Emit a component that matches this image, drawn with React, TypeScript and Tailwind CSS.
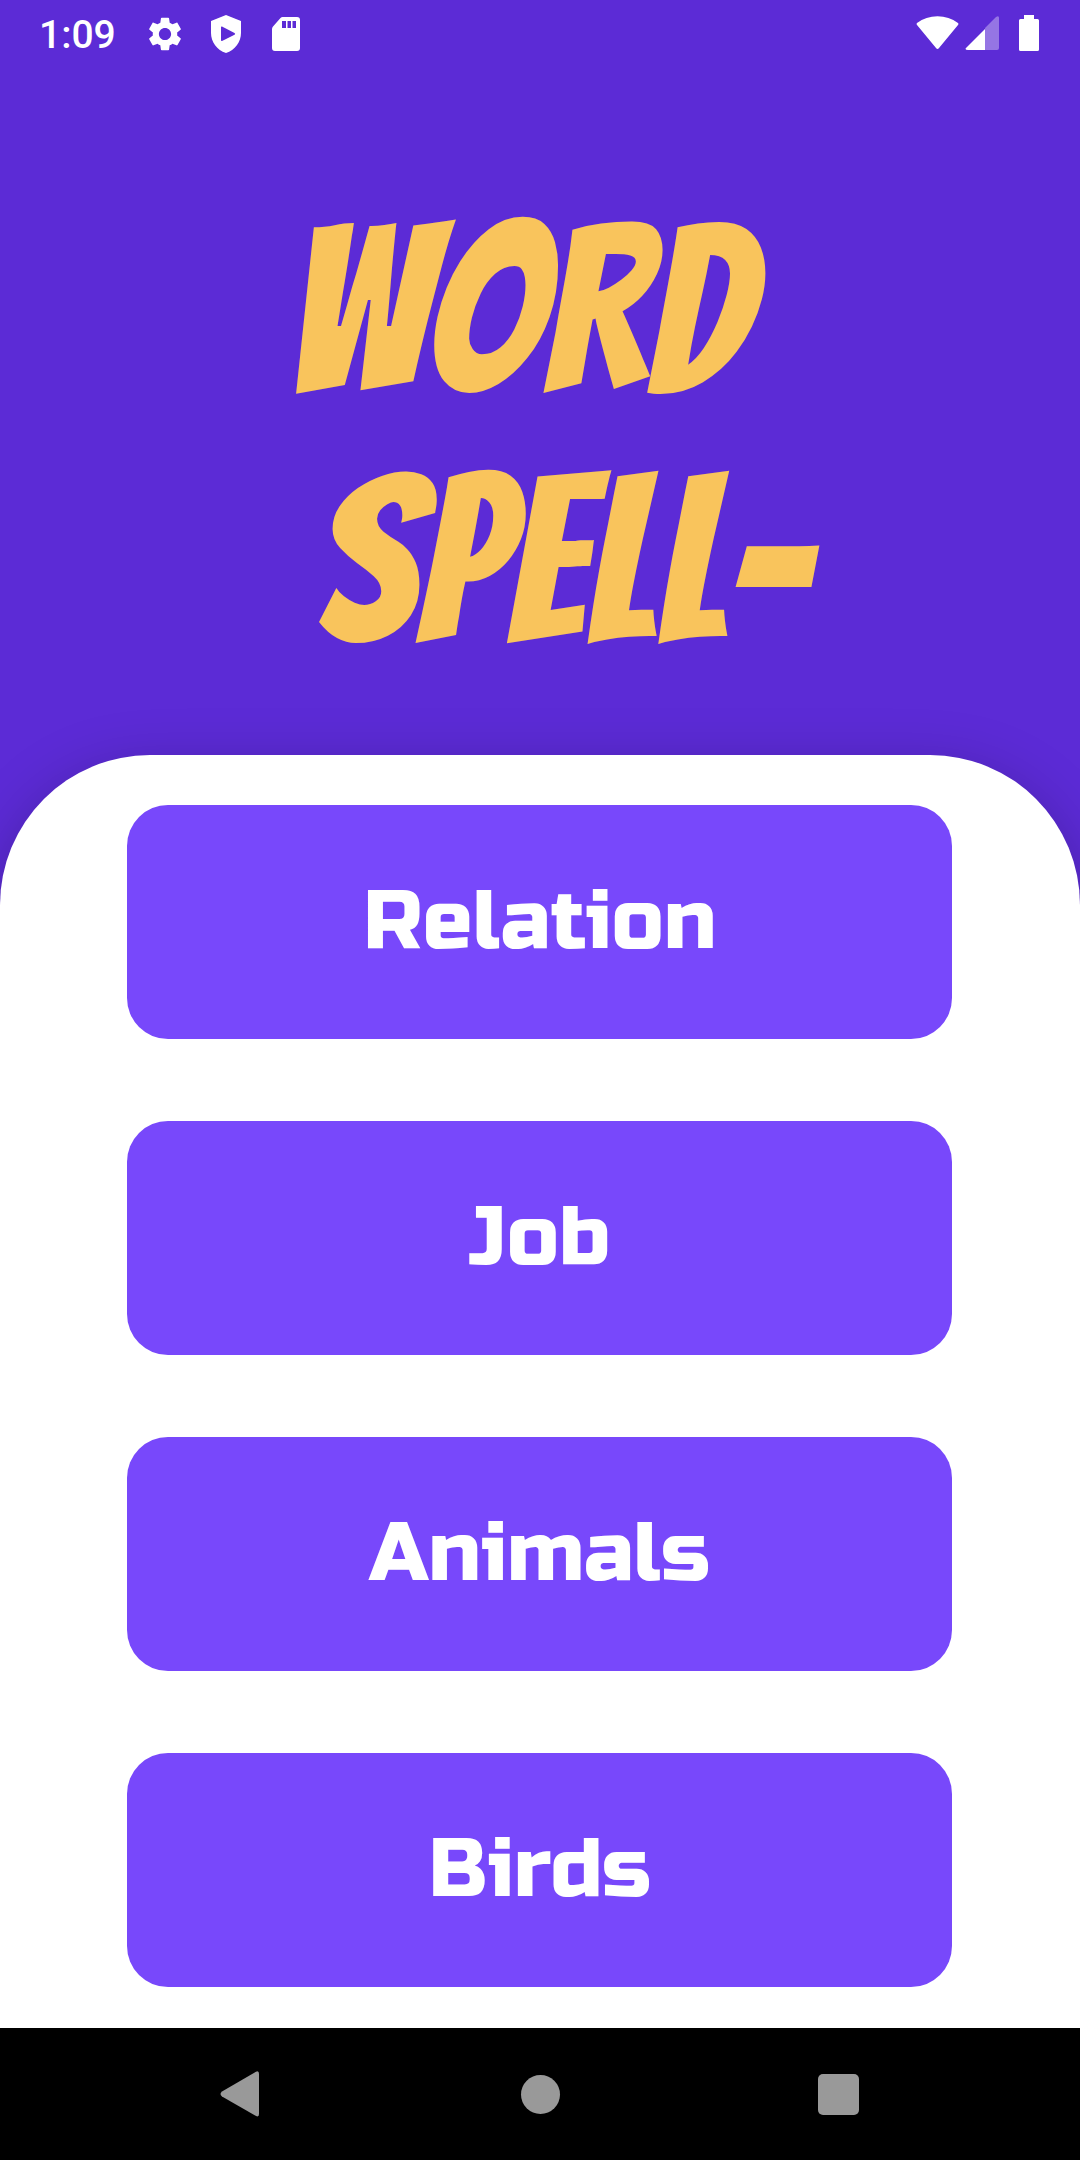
const categories = ["Relation", "Job", "Animals", "Birds"];

function StatusBar() {
  return (
    <div className="flex h-[68px] items-start justify-between pl-[39px] pr-[41px] text-white">
      <div className="flex h-[67px] items-center">
        <time className="w-[109px] pt-[2px] font-['Roboto',sans-serif] text-[39px] font-medium leading-[66px]">1:09</time>
        <svg className="h-[34px] w-[34px]" viewBox="2.4 2 19.2 20" fill="currentColor" aria-hidden="true">
          <path d="M19.14 12.94c.04-.3.06-.61.06-.94 0-.32-.02-.64-.07-.94l2.03-1.58c.18-.14.23-.41.12-.61l-1.92-3.32c-.12-.22-.37-.29-.59-.22l-2.39.96c-.5-.38-1.03-.7-1.62-.94l-.36-2.54c-.04-.24-.24-.41-.48-.41h-3.84c-.24 0-.43.17-.47.41l-.36 2.54c-.59.24-1.13.57-1.62.94l-2.39-.96c-.22-.08-.47 0-.59.22L2.74 8.87c-.12.21-.08.47.12.61l2.03 1.58c-.05.3-.09.63-.09.94s.02.64.07.94l-2.03 1.58c-.18.14-.23.41-.12.61l1.92 3.32c.12.22.37.29.59.22l2.39-.96c.5.38 1.03.7 1.62.94l.36 2.54c.05.24.24.41.48.41h3.84c.24 0 .44-.17.47-.41l.36-2.54c.59-.24 1.13-.56 1.62-.94l2.39.96c.22.08.47 0 .59-.22l1.92-3.32c.12-.22.07-.47-.12-.61l-2.01-1.58zM12 15.6c-1.98 0-3.6-1.62-3.6-3.6s1.62-3.6 3.6-3.6 3.6 1.62 3.6 3.6-1.62 3.6-3.6 3.6z" />
        </svg>
        <svg className="ml-7 h-[38px] w-8" viewBox="0 0 32 38" fill="currentColor" aria-hidden="true">
          <path fillRule="evenodd" d="M16 0 31 6V18C31 27 25 35 16 38 7 35 1 27 1 18V6ZM12 11.500Q11 11 11 12.500V25Q11 26.500 12.500 25.700L24.500 19.700Q26 19 24.500 18Z" />
        </svg>
        <svg className="ml-[30px] h-[34px] w-7" viewBox="0 0 28 34" fill="currentColor" aria-hidden="true">
          <path fillRule="evenodd" d="M10.500 0H25Q28 0 28 3V31Q28 34 25 34H3Q0 34 0 31V12Q0 10.500 1 9.500L8.500 1Q9.500 0 10.500 0ZM10 4V11H14V4ZM15.500 4V11H19V4ZM20.500 4V11H24V4Z" />
        </svg>
      </div>
      <div className="flex h-[66px] items-center">
        <svg className="h-[34px] w-[43px]" viewBox="0 0 43 34" fill="currentColor" aria-hidden="true">
          <path d="M1 9Q0 8 1 7Q10 .3 21.500.3T42 7Q43 8 42 9L23 32Q21.500 34 20 32Z" />
        </svg>
        <svg className="ml-[6px] h-[34px] w-[34px]" viewBox="0 0 34 34" fill="currentColor" aria-hidden="true">
          <path opacity=".35" d="M20 12 31 1Q34-1 34 2V32Q34 34 32 34H20Z" />
          <path d="M20 13V34H3Q-1 34 1.500 31.500Z" />
        </svg>
        <svg className="ml-5 h-9 w-5" viewBox="0 0 20 36" fill="currentColor" aria-hidden="true">
          <path d="M5 0H15V4H18.500Q20 4 20 5.500V34.500Q20 36 18.500 36H1.500Q0 36 0 34.500V5.500Q0 4 1.500 4H5Z" />
        </svg>
      </div>
    </div>
  );
}

function NavigationBar() {
  return (
    <nav className="grid h-[132px] grid-cols-[1fr_120px_1fr] items-center bg-black text-[#999999]" aria-label="System navigation">
      <button type="button" aria-label="Back" className="flex h-full items-center justify-center">
        <svg className="h-[46px] w-10" viewBox="0 0 40 46" fill="currentColor" aria-hidden="true">
          <path d="M36 .7Q39 -.6 39 3V43Q39 46.500 36 45L2 25.500Q-1 23 2 20.500Z" />
        </svg>
      </button>
      <button type="button" aria-label="Home" className="flex h-full items-center justify-center">
        <span className="size-[39px] rounded-full bg-[#999999]" />
      </button>
      <button type="button" aria-label="Recent apps" className="flex h-full items-center justify-center pr-1">
        <span className="size-[41px] rounded-[5px] bg-[#999999]" />
      </button>
    </nav>
  );
}

export default function App() {
  return (
    <div className="flex min-h-screen flex-col bg-[#5c2bd6]">
      <StatusBar />
      <header className="flex grow flex-col items-center justify-center pt-12 text-center">
        <h1 className="font-['Bangers','Roboto_Condensed','Liberation_Sans_Narrow',sans-serif] text-[234px] font-normal leading-[250px] text-[#f9c45c] [font-kerning:none]">
          <span className="block pr-11">WORD</span>
          <span className="block pl-[46px]">SPELL-</span>
        </h1>
      </header>
      <main className="flex flex-col gap-[82px] rounded-t-[150px] bg-white pb-[41px] pl-[127px] pr-[128px] pt-[50px] shadow-[0_16px_60px_rgba(0,0,0,0.25)]">
        {categories.map((name) => (
          <button
            key={name}
            type="button"
            className="h-[234px] w-full rounded-[41px] bg-[#7848fb] pb-[2px] font-['Russo_One','Inter',sans-serif] text-[83px] font-normal text-white"
          >
            {name}
          </button>
        ))}
      </main>
      <NavigationBar />
    </div>
  );
}
